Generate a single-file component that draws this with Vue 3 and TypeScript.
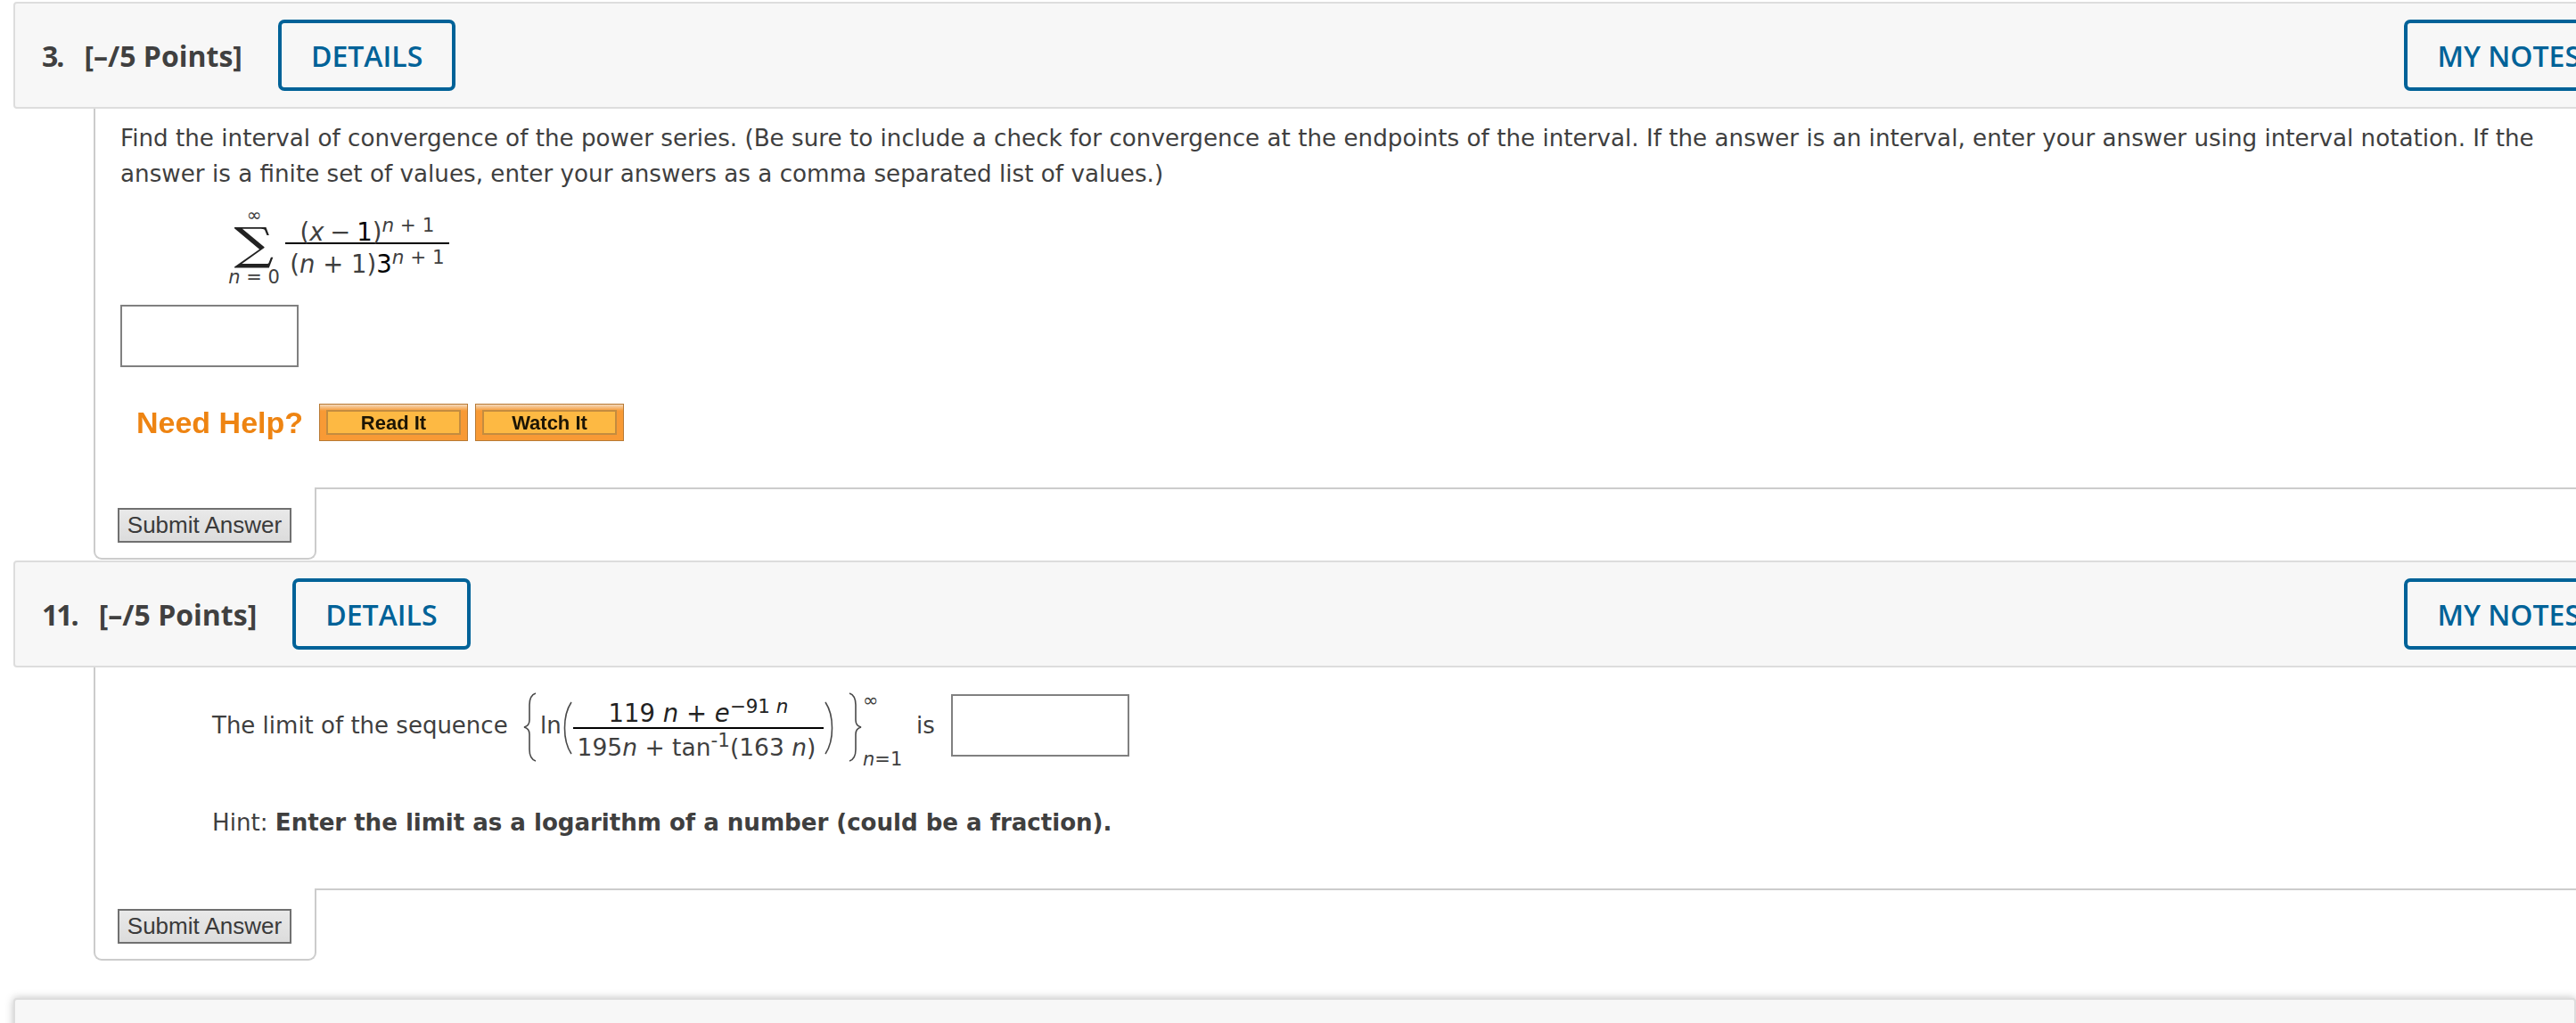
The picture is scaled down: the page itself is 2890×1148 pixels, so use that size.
<script setup lang="ts">
const helpLinks: string[] = ['Read It', 'Watch It']
</script>

<template>
  <div class="page">
    <!-- question 3 -->
    <section class="question first">
      <header class="q-header">
        <span class="q-num">3.</span>
        <span class="q-points">[–/5 Points]</span>
        <button class="outline-btn">DETAILS</button>
        <button class="outline-btn notes">MY NOTES</button>
      </header>
      <div class="q-body body-one">
        <p class="q-text">
          Find the interval of convergence of the power series. (Be sure to include a check for convergence at the endpoints of the interval. If the answer is an interval, enter your answer using interval notation. If the answer is a finite set of values, enter your answers as a comma separated list of values.)
        </p>
        <div class="series">
          <div class="sum">
            <span class="sum-top">∞</span>
            <span class="sum-sign">∑</span>
            <span class="sum-bottom"><i>n</i> = 0</span>
          </div>
          <div class="frac frac-one">
            <span class="num">(<i>x</i> − <b>1</b>)<sup><i>n</i> + 1</sup></span>
            <span class="den">(<i>n</i> + 1)<b>3</b><sup><i>n</i> + 1</sup></span>
          </div>
        </div>
        <input class="answer answer-one" type="text" />
        <div class="help">
          <span class="help-label">Need Help?</span>
          <button v-for="link in helpLinks" :key="link" class="help-btn"><span>{{ link }}</span></button>
        </div>
      </div>
      <div class="q-foot">
        <div class="tab"><button class="submit">Submit Answer</button></div>
        <div class="foot-rest"></div>
      </div>
    </section>

    <!-- question 11 -->
    <section class="question">
      <header class="q-header">
        <span class="q-num">11.</span>
        <span class="q-points">[–/5 Points]</span>
        <button class="outline-btn">DETAILS</button>
        <button class="outline-btn notes">MY NOTES</button>
      </header>
      <div class="q-body body-two">
        <div class="limit-line">
          <span class="limit-label">The limit of the sequence</span>
          <svg class="brace" width="17" height="78" viewBox="0 0 17 78" fill="none">
            <path d="M15 1C9 3 8 8 8 14V31C8 35 6 38 2 39C6 40 8 43 8 47V64C8 70 9 75 15 77" />
          </svg>
          <span class="ln">ln</span>
          <svg class="paren" width="14" height="60" viewBox="0 0 14 60" fill="none">
            <path d="M13 1C3 16 3 44 13 59" />
          </svg>
          <div class="frac frac-two">
            <span class="num">119 <i>n</i> + <i>e</i><sup>−91 <i>n</i></sup></span>
            <span class="den">195<i>n</i> + tan<sup>-1</sup>(163 <i>n</i>)</span>
          </div>
          <svg class="paren" width="14" height="60" viewBox="0 0 14 60" fill="none">
            <path d="M1 1C11 16 11 44 1 59" />
          </svg>
          <svg class="brace brace-right" width="17" height="78" viewBox="0 0 17 78" fill="none">
            <path d="M2 1C8 3 9 8 9 14V31C9 35 11 38 15 39C11 40 9 43 9 47V64C9 70 8 75 2 77" />
          </svg>
          <div class="limits">
            <span class="limits-top">∞</span>
            <span class="limits-bottom"><i>n</i>=1</span>
          </div>
          <span class="is">is</span>
          <input class="answer" type="text" />
        </div>
        <p class="hint">Hint: <strong>Enter the limit as a logarithm of a number (could be a fraction).</strong></p>
      </div>
      <div class="q-foot">
        <div class="tab"><button class="submit">Submit Answer</button></div>
        <div class="foot-rest"></div>
      </div>
    </section>

    <div class="next-header"></div>
  </div>
</template>

<style>
html,
body {
  overflow: hidden;
  background: #fff;
}
</style>

<style scoped>
.page {
  width: 2890px;
  height: 1148px;
  overflow: hidden;
  background: #fff;
  color: #3f3f3f;
  font-family: "DejaVu Sans", Verdana, sans-serif;
}

.first {
  padding-top: 2px;
}

.q-header {
  display: flex;
  align-items: center;
  box-sizing: border-box;
  width: 2927px;
  height: 120px;
  margin-left: 15px;
  padding-left: 30px;
  background: #f7f7f7;
  border: 2px solid #ddd;
  border-radius: 4px;
  font-family: "Open Sans", sans-serif;
  font-size: 32px;
  font-weight: 700;
  color: #404040;
}

.q-num {
  margin-right: 24px;
  letter-spacing: -2px;
}

.q-points {
  margin-right: 40px;
}

.outline-btn {
  box-sizing: border-box;
  height: 80px;
  padding: 0 33px;
  background: transparent;
  border: 4px solid #006298;
  border-radius: 7px;
  font-family: "Open Sans", sans-serif;
  font-size: 32px;
  font-weight: 600;
  color: #006298;
}

.notes {
  margin-left: auto;
  margin-right: 8px;
}

.q-body {
  margin-left: 105px;
  padding-left: 28px;
  border-left: 2px solid #ccc;
  box-sizing: border-box;
}

.body-one {
  height: 425px;
  padding-top: 13px;
}

.body-two {
  height: 248px;
  padding-left: 131px;
  padding-top: 24px;
}

.q-text {
  margin: 0;
  width: 2740px;
  font-size: 26.2px;
  line-height: 40px;
}

.series {
  display: flex;
  align-items: flex-start;
  padding-left: 120px;
  margin-top: 14px;
}

.sum {
  display: flex;
  flex-direction: column;
  align-items: center;
  width: 60px;
  padding-top: 5px;
}

.sum-top {
  font-size: 20px;
  line-height: 14px;
}

.sum-sign {
  display: inline-block;
  margin-top: 4px;
  font-family: "DejaVu Serif", serif;
  font-size: 50px;
  line-height: 44px;
  color: #222;
  transform: scaleX(1.25);
}

.sum-bottom {
  font-size: 21px;
  line-height: 22px;
  margin-top: 4px;
  white-space: nowrap;
}

.frac {
  display: flex;
  flex-direction: column;
  align-items: center;
  white-space: nowrap;
}

.frac-one {
  width: 184px;
  margin: 19px 0 0 5px;
  font-size: 27.5px;
}

.num {
  display: block;
  width: 100%;
  text-align: center;
  border-bottom: 2px solid #000;
}

.den {
  display: block;
}

.frac-one .num {
  line-height: 24px;
  word-spacing: -2px;
}

.frac-one .den {
  line-height: 44px;
}

.num b,
.den b {
  font-weight: 400;
  color: #000;
}

sup {
  font-size: 21.5px;
  line-height: 0;
  vertical-align: 10px;
  word-spacing: 0;
}

.answer {
  display: block;
  box-sizing: border-box;
  width: 200px;
  height: 70px;
  padding: 0;
  background: #fff;
  border: 2px solid #808080;
  border-radius: 0;
}

.answer-one {
  margin-top: 20px;
}

.help {
  display: flex;
  align-items: center;
  gap: 8px;
  margin-top: 41px;
  padding-left: 18px;
}

.help-label {
  width: 197px;
  font-family: "Liberation Sans", Arial, sans-serif;
  font-size: 34px;
  font-weight: 700;
  color: #ee8412;
  filter: blur(0.6px);
}

.help-btn {
  box-sizing: border-box;
  width: 167px;
  height: 42px;
  padding: 6px 7px;
  background: linear-gradient(#f3d9bd 0, #f89a35 7px);
  border: 1px solid #b87a35;
}

.help-btn span {
  display: block;
  box-sizing: border-box;
  height: 28px;
  background: #fdb943;
  border: 2px solid #c48c3f;
  font-family: "Liberation Sans", Arial, sans-serif;
  font-size: 22px;
  font-weight: 700;
  line-height: 25px;
  color: #1c1505;
  filter: blur(0.5px);
}

.q-foot {
  display: flex;
  height: 82px;
  margin-left: 105px;
}

.tab {
  box-sizing: border-box;
  width: 250px;
  height: 81px;
  padding: 23px 0 0 25px;
  border: 2px solid #ccc;
  border-top: 0;
  border-radius: 0 0 9px 9px;
}

.foot-rest {
  flex: 1;
  border-top: 2px solid #ccc;
  margin-left: -2px;
}

.submit {
  display: block;
  box-sizing: border-box;
  width: 195px;
  height: 39px;
  padding: 0;
  background: linear-gradient(#e9e9e9, #dcdcdc);
  border: 2px solid #707070;
  font-family: "Liberation Sans", Arial, sans-serif;
  font-size: 26px;
  color: #3a3a3a;
}

.limit-line {
  display: flex;
  align-items: center;
  height: 82px;
  font-size: 26px;
}

.limit-label {
  width: 348px;
  white-space: nowrap;
}

.brace {
  align-self: flex-start;
  margin-top: 4px;
}

.paren {
  align-self: flex-start;
  margin-top: 14px;
}

.brace path,
.paren path {
  stroke: #4a4a4a;
  stroke-width: 1.6;
}

.ln {
  margin-left: 3px;
  width: 22px;
}

.frac-two {
  align-self: flex-start;
  width: 281px;
  margin: 12px 1px 0;
}

.frac-two .num {
  font-size: 27.5px;
  line-height: 31px;
  color: #222;
}

.frac-two .den {
  font-size: 26.5px;
  line-height: 42px;
  margin-left: -4px;
}

.brace-right {
  margin-left: 12px;
}

.limits {
  align-self: flex-start;
  display: flex;
  flex-direction: column;
  justify-content: space-between;
  height: 88px;
  width: 46px;
  margin-top: 2px;
  font-size: 21px;
  line-height: 22px;
}

.is {
  width: 39px;
  margin-left: 14px;
}

.hint {
  margin: 48px 0 0;
  font-size: 26.15px;
  line-height: 40px;
}

.hint strong {
  letter-spacing: -0.06px;
}

.next-header {
  box-sizing: border-box;
  height: 60px;
  margin: 41px 0 0 15px;
  background: #f7f7f7;
  border: 2px solid #ddd;
  border-radius: 4px;
  box-shadow: 0 0 10px rgba(0, 0, 0, 0.25);
}
</style>
